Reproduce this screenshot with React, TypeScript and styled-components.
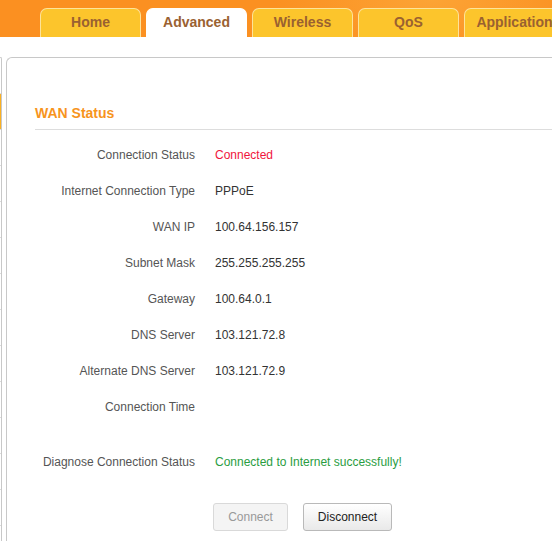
import React from 'react';
import styled, { createGlobalStyle } from "styled-components";

const GlobalStyle = createGlobalStyle`
    html, body {
        margin: 0;
        padding: 0;
        background: #ffffff;
        overflow: hidden;
    }
    body {
        font-family: "Liberation Sans", Arial, sans-serif;
        font-size: 12px;
        color: #333;
    }
`

type RowType = {
    label: string
    value?: string
    tone?: 'red' | 'green'
}

const tabs = ['Home', 'Advanced', 'Wireless', 'QoS', 'Application']

const rows: RowType[] = [
    {label: 'Connection Status', value: 'Connected', tone: 'red'},
    {label: 'Internet Connection Type', value: 'PPPoE'},
    {label: 'WAN IP', value: '100.64.156.157'},
    {label: 'Subnet Mask', value: '255.255.255.255'},
    {label: 'Gateway', value: '100.64.0.1'},
    {label: 'DNS Server', value: '103.121.72.8'},
    {label: 'Alternate DNS Server', value: '103.121.72.9'},
    {label: 'Connection Time'},
]

export default function App() {
    return (
        <>
            <GlobalStyle/>
            <Header>
                <Glow/>
                {tabs.map(t => (
                    <Tab key={t} active={t === 'Advanced'}>{t}</Tab>
                ))}
            </Header>
            <Body>
                <Sidebar>
                    {[0, 1, 2, 3, 4, 5, 6, 7, 8, 9, 10, 11, 12].map(i => (
                        <SideItem key={i} active={i === 1}/>
                    ))}
                </Sidebar>
                <Panel>
                    <Heading>WAN Status</Heading>
                    <Rows>
                        {rows.map(r => (
                            <Row key={r.label}>
                                <Label>{r.label}</Label>
                                <Value tone={r.tone}>{r.value}</Value>
                            </Row>
                        ))}
                    </Rows>
                    <Row spaced>
                        <Label>Diagnose Connection Status</Label>
                        <Value tone="green">Connected to Internet successfully!</Value>
                    </Row>
                    <Buttons>
                        <Button disabled width={75}>Connect</Button>
                        <Button width={89}>Disconnect</Button>
                    </Buttons>
                </Panel>
            </Body>
        </>
    );
}

const Header = styled.div`
    position: relative;
    height: 37px;
    background: #fb9021;
    display: flex;
    align-items: flex-end;
    gap: 5px;
    padding-left: 40px;
    overflow: hidden;
`

const Glow = styled.div`
    position: absolute;
    right: -40px;
    top: -60px;
    width: 320px;
    height: 120px;
    border-radius: 50%;
    background: radial-gradient(ellipse at center, rgba(255, 200, 90, 0.35), rgba(255, 200, 90, 0) 70%);
`

const Tab = styled.div<{active?: boolean}>`
    position: relative;
    flex: none;
    width: 101px;
    height: 29px;
    box-sizing: border-box;
    border: 1px solid ${p => p.active ? '#ffffff' : '#fde39a'};
    border-bottom: none;
    border-radius: 7px 7px 0 0;
    background: ${p => p.active ? '#ffffff' : '#fcc52c'};
    color: #9a6131;
    font-weight: bold;
    font-size: 14px;
    display: flex;
    align-items: center;
    justify-content: center;
    padding-bottom: 2px;
`

const Body = styled.div`
    display: flex;
    gap: 4px;
    padding-top: 20px;
`

const Sidebar = styled.div`
    flex: none;
    width: 1px;
    border: 1px solid #c8c8c8;
    border-left: none;
    border-bottom: none;
    border-radius: 0 3px 0 0;
    overflow: hidden;
`

const SideItem = styled.div<{active?: boolean}>`
    height: 35px;
    border-bottom: 1px solid #dcdcdc;
    background: ${p => p.active ? '#fbb122' : 'transparent'};
`

const Panel = styled.div`
    flex: 1;
    height: 484px;
    box-sizing: border-box;
    overflow: hidden;
    border: 1px solid #c8c8c8;
    border-right: none;
    border-bottom: none;
    border-radius: 6px 0 0 0;
    padding: 47px 0 0 28px;
`

const Heading = styled.h2`
    margin: 0;
    padding-bottom: 7px;
    border-bottom: 1px solid #dddddd;
    color: #f7941d;
    font-size: 14px;
    font-weight: bold;
    line-height: 17px;
`

const Rows = styled.div`
    padding-top: 7px;
`

const Row = styled.div<{spaced?: boolean}>`
    display: flex;
    align-items: center;
    height: 36px;
    margin-top: ${p => p.spaced ? '19px' : '0'};
`

const Label = styled.div`
    flex: none;
    width: 160px;
    text-align: right;
    color: #555555;
    padding-right: 20px;
`

const Value = styled.div<{tone?: 'red' | 'green'}>`
    color: ${p => p.tone === 'red' ? '#f0153c' : p.tone === 'green' ? '#2a9d3f' : '#333333'};
`

const Buttons = styled.div`
    display: flex;
    gap: 15px;
    padding: 23px 0 0 178px;
`

const Button = styled.button<{width: number}>`
    width: ${p => p.width}px;
    height: 28px;
    box-sizing: border-box;
    border: 1px solid ${p => p.disabled ? '#d9d9d9' : '#b9b9b9'};
    border-radius: 3px;
    background: ${p => p.disabled ? '#f4f4f4' : 'linear-gradient(#ffffff, #e9e9e9)'};
    color: ${p => p.disabled ? '#999999' : '#222222'};
    font-family: "Liberation Sans", Arial, sans-serif;
    font-size: 12px;
    padding: 0;
`
